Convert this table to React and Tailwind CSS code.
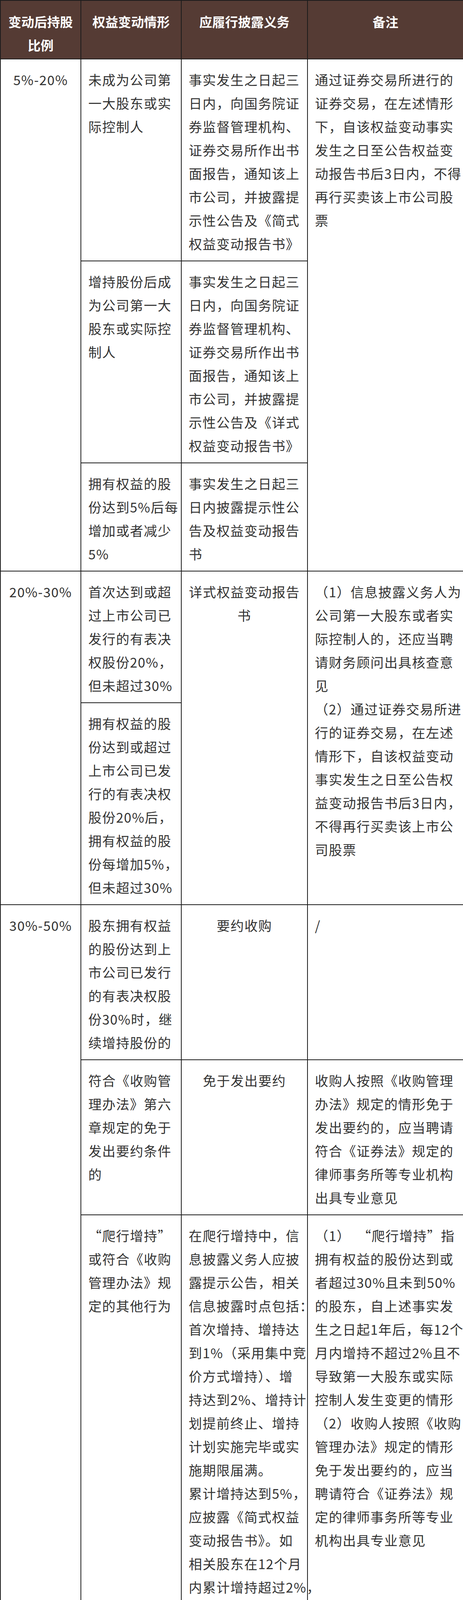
import React from 'react';

// 持股比例变动与信息披露义务对照表
const HEAD = [
  { lines: ['变动后持股', '比例'], w: 'w-[206px]' },
  { lines: ['权益变动情形'], w: 'w-[257px]' },
  { lines: ['应履行披露义务'], w: 'w-[323px]' },
  { lines: ['备注'], w: 'w-[399px]' },
];

const DUTY_SHORT = ['事实发生之日起三', '日内，向国务院证', '券监督管理机构、', '证券交易所作出书', '面报告，通知该上', '市公司，并披露提', '示性公告及《简式', '权益变动报告书》'];
const DUTY_LONG = ['事实发生之日起三', '日内，向国务院证', '券监督管理机构、', '证券交易所作出书', '面报告，通知该上', '市公司，并披露提', '示性公告及《详式', '权益变动报告书》'];
const LAWYER = ['（2）收购人按照《收购', '管理办法》规定的情形', '免于发出要约的，应当', '聘请符合《证券法》规', '定的律师事务所等专业', '机构出具专业意见'];

// each row: cells [{ lines, rowSpan, center }]
const ROWS = [
  [
    { lines: ['5%-20%'], rowSpan: 3, center: true },
    { lines: ['未成为公司第', '一大股东或实', '际控制人'] },
    { lines: DUTY_SHORT },
    { lines: ['通过证券交易所进行的', '证券交易，在左述情形', '下，自该权益变动事实', '发生之日至公告权益变', '动报告书后3日内，不得', '再行买卖该上市公司股', '票'], rowSpan: 3 },
  ],
  [
    { lines: ['增持股份后成', '为公司第一大', '股东或实际控', '制人'] },
    { lines: DUTY_LONG },
  ],
  [
    { lines: ['拥有权益的股', '份达到5%后每', '增加或者减少', '5%'] },
    { lines: ['事实发生之日起三', '日内披露提示性公', '告及权益变动报告', '书'] },
  ],
  [
    { lines: ['20%-30%'], rowSpan: 2, center: true },
    { lines: ['首次达到或超', '过上市公司已', '发行的有表决', '权股份20%，', '但未超过30%'] },
    { lines: ['详式权益变动报告', '书'], rowSpan: 2, center: true },
    { lines: ['（1）信息披露义务人为', '公司第一大股东或者实', '际控制人的，还应当聘', '请财务顾问出具核查意', '见', '（2）通过证券交易所进', '行的证券交易，在左述', '情形下，自该权益变动', '事实发生之日至公告权', '益变动报告书后3日内，', '不得再行买卖该上市公', '司股票'], rowSpan: 2 },
  ],
  [
    { lines: ['拥有权益的股', '份达到或超过', '上市公司已发', '行的有表决权', '股份20%后，', '拥有权益的股', '份每增加5%，', '但未超过30%'] },
  ],
  [
    { lines: ['30%-50%'], rowSpan: 3, center: true },
    { lines: ['股东拥有权益', '的股份达到上', '市公司已发行', '的有表决权股', '份30%时，继', '续增持股份的'] },
    { lines: ['要约收购'], center: true },
    { lines: ['/'] },
  ],
  [
    { lines: ['符合《收购管', '理办法》第六', '章规定的免于', '发出要约条件', '的'] },
    { lines: ['免于发出要约'], center: true },
    { lines: ['收购人按照《收购管理', '办法》规定的情形免于', '发出要约的，应当聘请', '符合《证券法》规定的', '律师事务所等专业机构', '出具专业意见'] },
  ],
  [
    { lines: ['“爬行增持”', '或符合《收购', '管理办法》规', '定的其他行为'] },
    { lines: ['在爬行增持中，信', '息披露义务人应披', '露提示公告，相关', '信息披露时点包括：', '首次增持、增持达', '到1%（采用集中竞', '价方式增持）、增', '持达到2%、增持计', '划提前终止、增持', '计划实施完毕或实', '施期限届满。', '累计增持达到5%，', '应披露《简式权益', '变动报告书》。如', '相关股东在12个月', '内累计增持超过2%，', '应改为要约方式进', '行（符合条件的，', '可以免于发出要约）'] },
    { lines: ['（1）\u00a0\u00a0“爬行增持”指', '拥有权益的股份达到或', '者超过30%且未到50%', '的股东，自上述事实发', '生之日起1年后，每12个', '月内增持不超过2%且不', '导致第一大股东或实际', '控制人发生变更的情形', ...LAWYER] },
  ],
  [
    { lines: ['50%以上'], center: true },
    { lines: ['拥有权益的股', '份达到或者超', '过上市公司已', '发行的有表决', '权股份50%的', '股东，继续增', '持不影响该公', '司的上市地位'] },
    { lines: ['参照“爬行增持”，', '且不受12个月内增', '持不超过2%的限制'] },
    { lines: ['（1）左述股东每累计增', '持2%，在事实发生当日', '公告，事实发生当日不', '得再行增持股份', ...LAWYER] },
  ],
  [
    { lines: ['其他信息披', '露要求'], center: true },
    { lines: ['拥有权益的股', '份达到5%后每', '增加或者减少', '1%'] },
    { lines: ['于该事实发生的次', '日通知上市公司，', '并予公告'] },
    { lines: ['无需停止交易'] },
  ],
];

function Lines({ lines }) {
  return lines.map((l, i) => (
    <div key={i} className="whitespace-nowrap">{l}</div>
  ));
}

export default function App() {
  return (
    <div className="w-[1185px] bg-white font-['Noto_Sans_CJK_SC','Noto_Sans',sans-serif]">
      <table className="w-[1185px] table-fixed border-collapse">
        <thead>
          <tr className="bg-[#553b34] text-white">
            {HEAD.map((h, i) => (
              <th key={i} className={`${h.w} border-2 border-[#1c1c1c] px-2 pt-[23px] pb-[5px] align-top text-center text-[33px] font-bold leading-[60px]`}>
                <Lines lines={h.lines} />
              </th>
            ))}
          </tr>
        </thead>
        <tbody className="text-[34px] leading-[60px] tracking-[1.5px] text-[#333]">
          {ROWS.map((row, r) => (
            <tr key={r}>
              {row.map((c, i) => (
                <td
                  key={i}
                  rowSpan={c.rowSpan}
                  className={`border-2 border-[#1c1c1c] pt-[22px] pb-[13px] align-top ${c.center ? 'px-2 text-center' : 'pl-[18px] pr-3 text-left'}`}
                >
                  <Lines lines={c.lines} />
                </td>
              ))}
            </tr>
          ))}
        </tbody>
      </table>
    </div>
  );
}
